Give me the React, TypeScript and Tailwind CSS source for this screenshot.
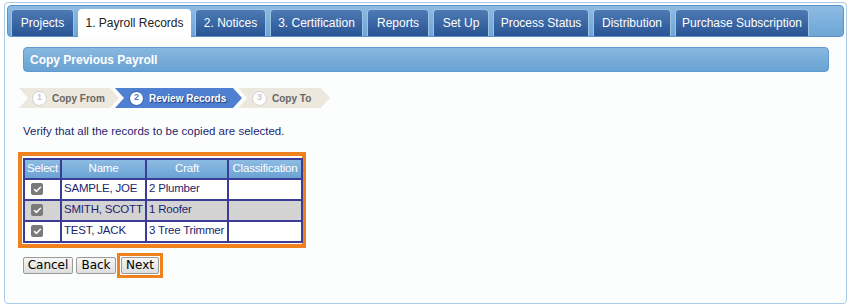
import { Check } from 'lucide-react';

const TABS = [
  { label: 'Projects', w: 'w-[63px]' },
  { label: '1. Payroll Records', w: 'w-[113px]', active: true },
  { label: '2. Notices', w: 'w-[71px]' },
  { label: '3. Certification', w: 'w-[93px]' },
  { label: 'Reports', w: 'w-[62px]' },
  { label: 'Set Up', w: 'w-[56px]' },
  { label: 'Process Status', w: 'w-[96px]' },
  { label: 'Distribution', w: 'w-[78px]' },
  { label: 'Purchase Subscription', w: 'w-[134px]' },
];

const ROWS = [
  { name: 'SAMPLE, JOE', craft: '2 Plumber', alt: false },
  { name: 'SMITH, SCOTT', craft: '1 Roofer', alt: true },
  { name: 'TEST, JACK', craft: '3 Tree Trimmer', alt: false },
];

function Step({ n, label, state, first }: { n: number; label: string; state: 'done' | 'active' | 'todo'; first?: boolean }) {
  const active = state === 'active';
  return (
    <div
      className={`h-[20px] flex items-center gap-[5px] ${first ? 'pl-[13px] w-[100px]' : 'pl-[14px] -ml-[4px]'} ${
        active ? 'bg-[#4f7fd0] w-[127px]' : 'bg-[#ece8de]'
      } ${state === 'todo' ? 'w-[92px]' : ''} [clip-path:polygon(0_0,calc(100%-9px)_0,100%_50%,calc(100%-9px)_100%,0_100%,9px_50%)]`}
    >
      <span
        className={`w-[15px] h-[15px] rounded-full flex items-center justify-center text-[9px] font-bold ${
          active ? 'bg-white text-[#4f7fd0] border border-[#2d5ba8]' : 'bg-white text-[#c8c8c8] border border-[#cfcfcf]'
        }`}
      >
        {n}
      </span>
      <span
        className={`text-[10px] font-bold ${active ? 'text-white [text-shadow:1px_1px_1px_#1c3d78]' : 'text-[#666]'}`}
      >
        {label}
      </span>
    </div>
  );
}

function Btn({ label, w }: { label: string; w: string }) {
  return (
    <button
      className={`${w} h-[17px] border border-[#9a9a9a] rounded-[2px] bg-gradient-to-b from-[#f6f6f6] to-[#dedede] text-[12px] leading-none text-black font-['DejaVu_Sans',sans-serif] flex items-center justify-center`}
    >
      {label}
    </button>
  );
}

const cell = 'border-2 border-[#3c3c96] overflow-hidden whitespace-nowrap';

export default function App() {
  return (
    <div className="w-[849px] h-[307px] bg-white font-['Liberation_Sans',Arial,sans-serif] pt-[2px] pl-[4px]">
      <div className="w-[843px] h-[302px] border border-[#a9cbe8] rounded-[4px] bg-[#fcfefe] pt-[2px] px-[2px]">
        {/* Tab bar */}
        <div className="h-[32px] rounded-[4px] border border-[#5b93c9] bg-gradient-to-b from-[#8dbbe2] to-[#6ea6d7] flex items-end gap-[4px] pl-[3px]">
          {TABS.map(t => (
            <div
              key={t.label}
              className={`${t.w} h-[27px] rounded-t-[4px] flex items-center justify-center text-[12px] ${
                t.active
                  ? 'bg-white text-[#222] h-[28px] -mb-px'
                  : 'border border-b-0 border-[#9fc2e4] bg-gradient-to-b from-[#4d7ab4] to-[#2a5494] text-white'
              }`}
            >
              {t.label}
            </div>
          ))}
        </div>

        <div className="px-[16px] pt-[10px]">
          {/* Panel header */}
          <div className="h-[25px] w-[806px] rounded-[4px] border border-[#5e9bd1] bg-gradient-to-b from-[#88b8df] to-[#69a2d3] flex items-center pl-[6px] text-white text-[12px] font-bold">
            Copy Previous Payroll
          </div>

          {/* Steps */}
          <div className="flex mt-[16px] -ml-[4px]">
            <Step n={1} label="Copy From" state="done" first />
            <Step n={2} label="Review Records" state="active" />
            <Step n={3} label="Copy To" state="todo" />
          </div>

          <p className="mt-[15px] text-[11.5px] text-[#231f6e]">Verify that all the records to be copied are selected.</p>

          {/* Records table */}
          <div className="mt-[12px] -ml-[5px] w-[288px] border-[4px] border-[#f0821e] pt-[2px] pl-[1px] pb-[1px]">
            <table className="table-fixed w-[278px] border-collapse text-[11.5px] text-[#231f6e] tracking-[-0.2px]">
              <thead>
                <tr className="h-[17px] bg-gradient-to-b from-[#8fbde3] to-[#6aa3d4] text-white">
                  <th className={`w-[37px] font-normal ${cell}`}>Select</th>
                  <th className={`w-[85px] font-normal ${cell}`}>Name</th>
                  <th className={`w-[82px] font-normal ${cell}`}>Craft</th>
                  <th className={`w-[74px] font-normal ${cell}`}>Classification</th>
                </tr>
              </thead>
              <tbody>
                {ROWS.map(r => (
                  <tr key={r.name} className={`h-[21px] ${r.alt ? 'bg-[#d3d3d3]' : 'bg-white'}`}>
                    <td className={`${cell} pl-[6px]`}>
                      <div className="w-[12px] h-[12px] rounded-[2px] bg-[#7a7a7a] flex items-center justify-center">
                        <Check size={9} strokeWidth={4} color="#fff" />
                      </div>
                    </td>
                    <td className={`${cell} pl-[2px]`}>{r.name}</td>
                    <td className={`${cell} pl-[2px]`}>{r.craft}</td>
                    <td className={cell}></td>
                  </tr>
                ))}
              </tbody>
            </table>
          </div>

          {/* Buttons */}
          <div className="flex items-center mt-[5px] gap-[3px]">
            <Btn label="Cancel" w="w-[50px]" />
            <Btn label="Back" w="w-[40px]" />
            <div className="border-[3px] border-[#f0821e] p-[1px] -ml-[2px]">
              <Btn label="Next" w="w-[38px]" />
            </div>
          </div>
        </div>
      </div>
    </div>
  );
}
